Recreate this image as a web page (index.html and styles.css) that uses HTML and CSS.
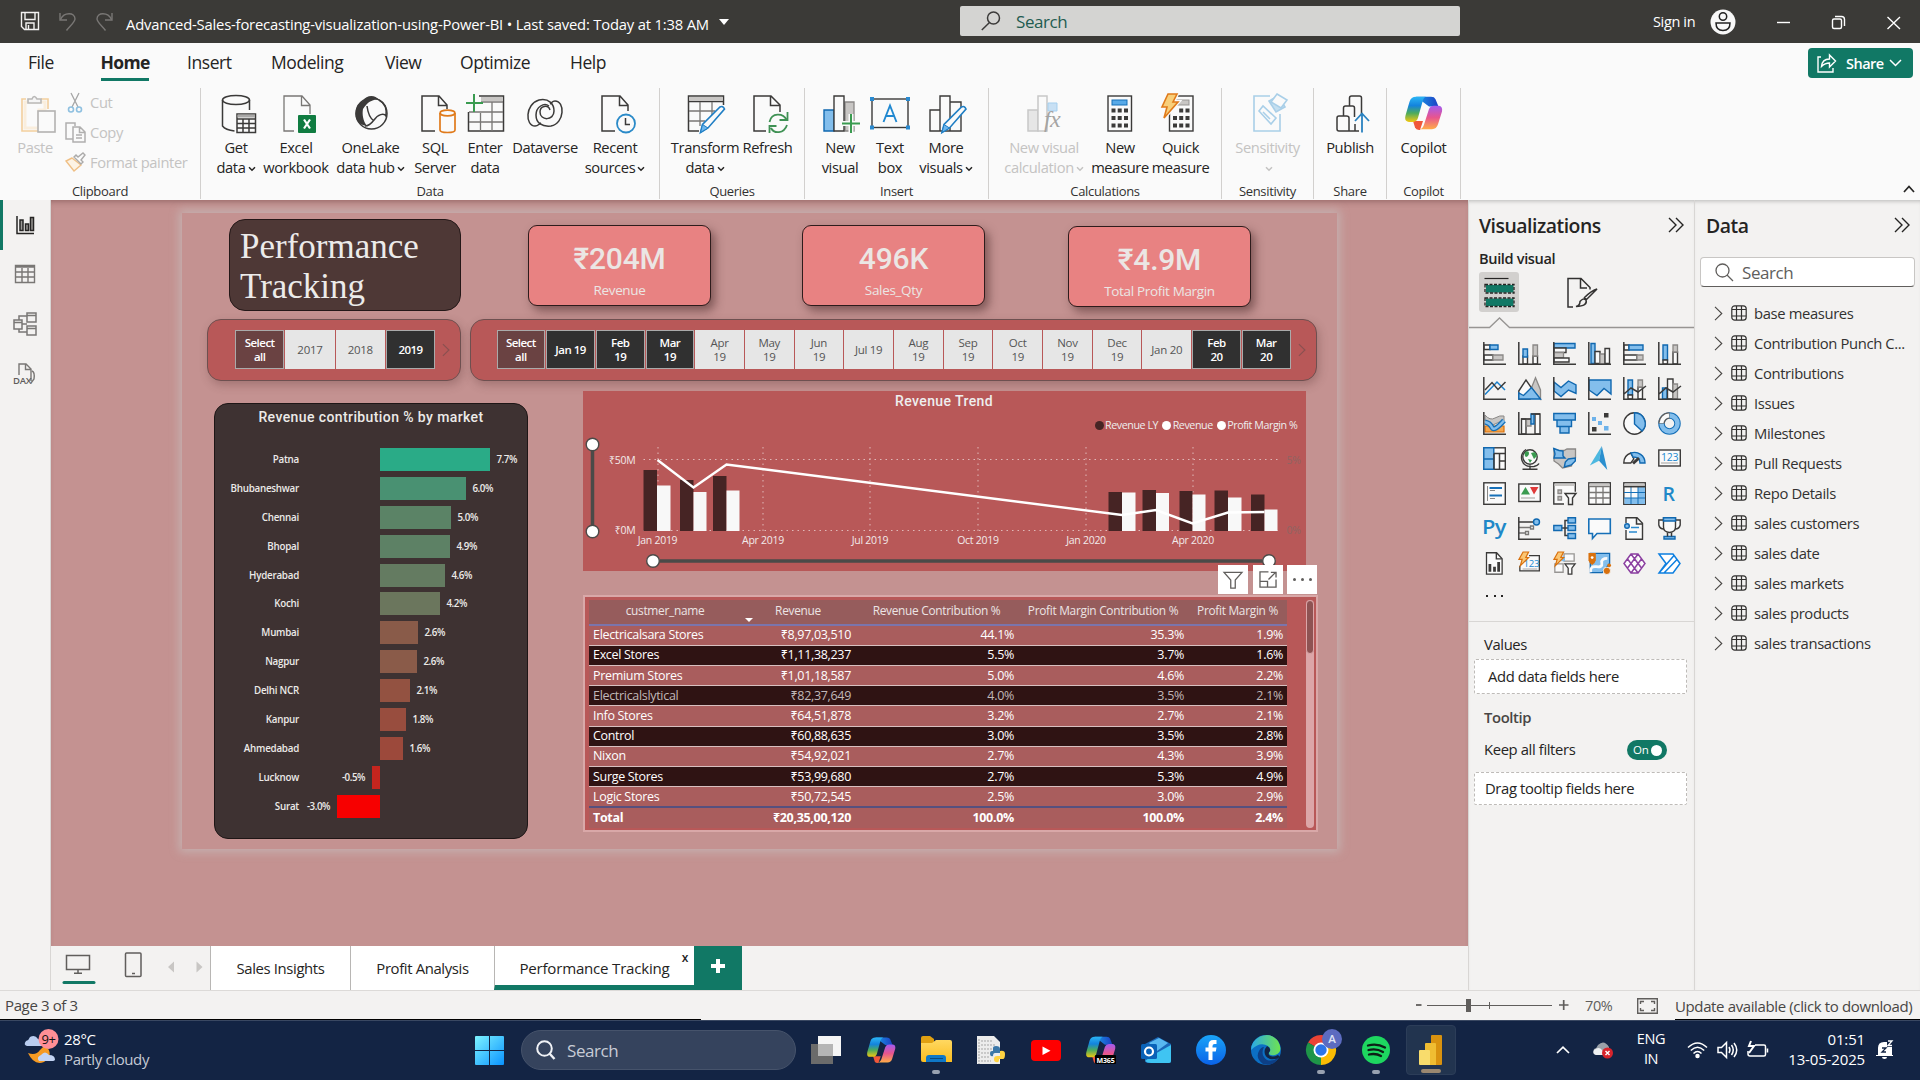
FILE: index.html
```html
<!DOCTYPE html>
<html lang="en">
<head>
<meta charset="utf-8">
<title>Advanced-Sales-forecasting-visualization-using-Power-BI</title>
<link rel="stylesheet" href="styles.css">
</head>
<body>
<svg class="defs" width="0" height="0" aria-hidden="true">
  <defs>
    <linearGradient id="cpA" x1="0" y1="0" x2="0" y2="1"><stop offset="0" stop-color="#2bb5f5"/><stop offset=".35" stop-color="#1383dd"/><stop offset=".65" stop-color="#4cab5c"/><stop offset="1" stop-color="#f2c811"/></linearGradient>
    <linearGradient id="cpB" x1="0" y1="0" x2="0" y2="1"><stop offset="0" stop-color="#a35bf0"/><stop offset=".5" stop-color="#e8558e"/><stop offset="1" stop-color="#ffac48"/></linearGradient>
    <linearGradient id="cpC" x1="0" y1="0" x2="1" y2="0"><stop offset="0" stop-color="#1b9be8"/><stop offset="1" stop-color="#1c3fc4"/></linearGradient>
    <linearGradient id="win" x1="0" y1="0" x2="1" y2="1"><stop offset="0" stop-color="#7df3ff"/><stop offset="1" stop-color="#0a93ff"/></linearGradient>
    <linearGradient id="edgeA" x1="0" y1="0" x2="1" y2="0"><stop offset="0" stop-color="#2aa9e8"/><stop offset="1" stop-color="#6fe34f"/></linearGradient>
    <linearGradient id="fbg" x1="0" y1="0" x2="0" y2="1"><stop offset="0" stop-color="#1aa4f8"/><stop offset="1" stop-color="#0a62e8"/></linearGradient>
    <linearGradient id="fold" x1="0" y1="0" x2="0" y2="1"><stop offset="0" stop-color="#ffd861"/><stop offset="1" stop-color="#fbbd20"/></linearGradient>
    <symbol id="copilot" viewBox="0 0 38 42" preserveAspectRatio="none">
      <path fill="url(#cpC)" d="M11 1h15q3.500 0 4.500 3l3 9H24Z"/>
      <path fill="#f0573a" d="M8 31h10l-3 11h-1q-3 0-4-3Z"/>
      <path fill="url(#cpA)" d="M11 1h10q-2.500 1-3.500 6L13 27q-1 5-5 5H4q-5 0-3.500-8L4.500 7Q6 1 11 1Z"/>
      <path fill="url(#cpB)" d="M27 41H14q3.500 0 4.800-5L24 16q1.500-4 5-4h4q5 0 4 7l-4 16q-1.500 6-6 6Z"/>
    </symbol>
    <symbol id="table" viewBox="0 0 16 16"><g fill="none" stroke="#323130" stroke-width="1.200"><rect x=".8" y=".8" width="14.400" height="14.400" rx="3"/><path d="M5.500 1v14M10.500 1v14M1 4.500h14M1 11h14"/></g></symbol>
    <symbol id="chev" viewBox="0 0 9 15"><path d="M1 .8 7.800 7.500 1 14.200" fill="none" stroke="#484644" stroke-width="1.100"/></symbol>
    <symbol id="dbl" viewBox="0 0 16 16"><path d="M1 1l7 7-7 7M8 1l7 7-7 7" fill="none" stroke="#252423" stroke-width="1.400"/></symbol>
    <symbol id="down" viewBox="0 0 8 6"><path d="M1 1.200l3 3 3-3" fill="none" stroke="currentColor" stroke-width="1.500"/></symbol>
  </defs>
</svg>

<header class="titlebar">
  <svg class="quick" width="100" height="24" viewBox="0 0 100 24" fill="none">
    <g stroke="#f3f2f1" stroke-width="1.400"><path d="M1.500 2.500h17v17H4.500l-3-3Z"/><path d="M5 2.500v7h10v-7M6 19v-6h8v6M8.500 15v4"/></g>
    <g stroke="#797775" stroke-width="1.400"><path d="M40 3v7h7"/><path d="M40.500 9.500C44 2 55 2 55 9c0 3-5 7-8.500 11.500"/><path d="M92 3v7h-7"/><path d="M91.500 9.500C88 2 77 2 77 9c0 3 5 7 8.500 11.500"/></g>
  </svg>
  <span class="doc">Advanced-Sales-forecasting-visualization-using-Power-BI • Last saved: Today at 1:38 AM</span>
  <svg class="caret" width="10" height="6"><path d="M0 0h10L5 6Z" fill="#fff"/></svg>
  <div class="search">
    <svg width="20" height="20" viewBox="0 0 20 20" fill="none" stroke="#3b3a39" stroke-width="1.500"><circle cx="12.500" cy="7" r="6"/><path d="M8.500 11.500 .8 19"/></svg>
    <span>Search</span>
  </div>
  <span class="signin">Sign in</span>
  <svg class="avatar" width="26" height="26" viewBox="0 0 26 26"><circle cx="13" cy="13" r="12.500" fill="#f8f8f8"/><g fill="none" stroke="#222" stroke-width="1.500"><circle cx="13" cy="7.500" r="3.700"/><path d="M6 14h14q0 7.500-7 7.500T6 14Z"/></g></svg>
  <svg class="winbtns" width="126" height="16" viewBox="0 0 126 16" fill="none" stroke="#fff" stroke-width="1.400"><path d="M1 7.500h13"/><rect x="56.500" y="4" width="9" height="9.500" rx="1.500"/><path d="M59 1.500h6.500q3 0 3 3V11"/><path d="M111.500 2l12.500 12M124 2l-12.500 12"/></svg>
</header>

<nav class="menu">
  <span class="m-file">File</span><span class="m-home">Home</span><span class="m-ins">Insert</span><span class="m-mod">Modeling</span><span class="m-view">View</span><span class="m-opt">Optimize</span><span class="m-help">Help</span>
  <div class="share">
    <svg width="20" height="20" viewBox="0 0 20 20" fill="none" stroke="#fff" stroke-width="1.400"><path d="M4 4H1v15h15v-4"/><path d="M4.500 13.500C5 8 8 6 12.500 6V2l6 6-6 6v-4C9 10 7 11 4.500 13.500Z"/></svg>
    <span>Share</span>
    <svg width="13" height="8" viewBox="0 0 13 8" fill="none" stroke="#fff" stroke-width="1.500"><path d="M1 1l5.500 5.500L12 1"/></svg>
  </div>
</nav>

<section class="ribbon">
  <div class="group g-clip">
    <div class="clip">
      <div class="paste off"><svg width="36" height="40" viewBox="0 0 36 40" fill="none" stroke-width="1.600"><path d="M5 5H1v32h17M20 5h7v10" stroke="#f3cf9d"/><path d="M4 8v26h14V16h6V8Z" stroke="#faeedd" stroke-width="3"/><path d="M7 9V5h4q2-5 5 0h4v4Z" stroke="#b9b8b7" fill="#f5f5f5"/><rect x="17" y="17" width="17" height="21" stroke="#b3b2b1" fill="#fafafa"/></svg><span>Paste</span></div>
      <div class="cliplist off">
        <div><svg width="21" height="21" viewBox="0 0 21 21" fill="none"><path d="M6 1l7 14M14 1 7 15" stroke="#a5a5a5" stroke-width="1.300"/><g stroke="#8fc0e0" stroke-width="1.600"><circle cx="6" cy="17.500" r="2.500"/><circle cx="14" cy="17.500" r="2.500"/></g></svg><span>Cut</span></div>
        <div><svg width="21" height="21" viewBox="0 0 21 21" fill="none" stroke="#b0afae" stroke-width="1.500"><path d="M8 17H1V1h9v3"/><path d="M8 5h7l5 5v10H8ZM14.500 5v5.500H20M11 13h6M11 16h6"/></svg><span>Copy</span></div>
        <div><svg width="21" height="21" viewBox="0 0 21 21" fill="none" stroke-width="1.400"><path d="M7 6 1 9l8 10 7-6Z" stroke="#efbf85" fill="#fdf3e4"/><path d="M9 5l7 7 2-2-2-2 4-5-2-2-5 4-2-2Z" stroke="#acabaa"/></svg><span>Format painter</span></div>
      </div>
    </div>
    <div class="gname">Clipboard</div>
  </div>
  <div class="group g-data">
    <div class="btns">
      <div class="btn"><svg class="ri" viewBox="0 0 40 40"><path class="k" d="M6.500 6v26q3 4 12 5M33.500 6v10"/><ellipse class="k" cx="20" cy="6" rx="13.500" ry="4.500"/><path class="k" d="M21 20h18.500v18.500H21ZM21 25h18.500M21 29.500h18.500M21 34h18.500M27 25v13M33 25v13"/><path d="M21.500 20.500h17.500v3H21.500Z" fill="#a9a8a7"/></svg><span>Get<br>data<svg class="dn"><use href="#down"/></svg></span></div>
      <div class="btn"><svg class="ri" viewBox="0 0 40 40"><path class="gl" d="M18 37H8V2h18l8 9v9M25.500 2v9.500H34"/><rect x="22" y="21" width="18" height="18" rx="1" fill="#107c41"/><path d="M28 25.500l6 9M34 25.500l-6 9" stroke="#fff" stroke-width="2.200"/></svg><span>Excel<br>workbook</span></div>
      <div class="btn"><svg class="ri" viewBox="0 0 40 40"><circle class="k" cx="20.500" cy="19.500" r="15.500"/><path d="M12 7C15 1 24 0 28 6c-5-1-11 1-16 9-1 5 0 12 4 17C6 31 2 22 6 13c1-3 3-4 6-6Z" fill="#3b3a39"/><path class="k" d="M28 6c6 3 8 8 7 16-2-3-8-2-12 4-3 4-6 6-9 6M16 12c1 8 4 13 7 15"/></svg><span>OneLake<br>data hub<svg class="dn"><use href="#down"/></svg></span></div>
      <div class="btn"><svg class="ri" viewBox="0 0 40 40"><path class="k" d="M20 37H7V2h17l8 9v4M23.500 2v9.500H32"/><g fill="#fafafa" stroke="#e07a1a" stroke-width="1.700"><path d="M25 19v17q0 2.500 7.500 2.500T40 36V19"/><ellipse cx="32.500" cy="19" rx="7.400" ry="2.800"/></g></svg><span>SQL<br>Server</span></div>
      <div class="btn"><svg class="ri" viewBox="0 0 40 40"><path class="k" d="M14 2h24.500v35H3.500V18"/><path d="M16 3h21.500v4H16Z" fill="#c8c6c4"/><path class="gl" d="M16 8h22M4 18h34M4 28h34M15.500 19v18M27 8v29"/><path d="M9 0v18M1 9h17" stroke="#3a9b50" stroke-width="2"/></svg><span>Enter<br>data</span></div>
      <div class="btn"><svg class="ri" viewBox="0 0 40 40"><g class="k"><path d="M10 32C0 32 0 10 14 6c10-2 15 4 15 11 0 10-14 10-14 1 0-6 8-8 10-2"/><path d="M30 7c10 0 10 22-4 25-9 1-15-3-15-11 0-8 8-13 13-9"/><path d="M30 7c-3 0-3 2-5 3M10 32c3 0 4-2 6-3"/></g></svg><span>Dataverse</span></div>
      <div class="btn"><svg class="ri" viewBox="0 0 40 40"><path class="k" d="M20 37H7V2h18l8 9v6M24.500 2v9.500H33"/><circle cx="31" cy="29.500" r="9" fill="#fafafa" stroke="#2a8ac8" stroke-width="1.800"/><path d="M30.500 24v6.500H35" stroke="#3b3a39" fill="none" stroke-width="1.500"/></svg><span>Recent<br>sources<svg class="dn"><use href="#down"/></svg></span></div>
    </div>
    <div class="gname">Data</div>
  </div>
  <div class="group g-query">
    <div class="btns">
      <div class="btn"><svg class="ri" viewBox="0 0 40 40"><path class="k" d="M14 37H3.500V2h35v9M3.500 7.500h35"/><path d="M4.500 3h33v4h-33Z" fill="#c8c6c4"/><path class="gl" d="M4 17h26M4 27h16M15 8v24M27 8v14"/><path class="pen" d="M15.500 38.500l2-8L35 13q3-1.500 4.500 2L23 34Z"/><path class="pb" d="M15.500 38.500l2-8L23 34Z"/></svg><span>Transform<br>data<svg class="dn"><use href="#down"/></svg></span></div>
      <div class="btn"><svg class="ri" viewBox="0 0 40 40"><path class="k" d="M18 37H6V2h17l9 9v7M22.500 2v9.500H32"/><g fill="none" stroke="#3f9154" stroke-width="1.800"><path d="M21.500 28c2-10 14-9 17-2M39.500 18v8h-8M39 31c-3 9-13 9-16 3M21.500 39v-7h7"/></g></svg><span>Refresh</span></div>
    </div>
    <div class="gname">Queries</div>
  </div>
  <div class="group g-ins">
    <div class="btns">
      <div class="btn"><svg class="ri" viewBox="0 0 40 40"><path class="g" d="M25 8h9v29h-9Z"/><path class="b" d="M4 16h10v21H4Z"/><path class="w" d="M14 2h10v35H14Z"/><path d="M31 20v19M22 29.500h18" stroke="#fafafa" stroke-width="5"/><path d="M31 20v19M22 29.500h18" stroke="#3a9b50" stroke-width="2"/></svg><span>New<br>visual</span></div>
      <div class="btn"><svg class="ri" viewBox="0 0 40 40"><rect class="w" x="2" y="5" width="36" height="28.500"/><path d="M0 3h4v4H0ZM36 3h4v4h-4ZM0 31.500h4v4H0ZM36 31.500h4v4h-4Z" fill="#2a8ad0"/><path d="M13.500 28 20 11.500 26.500 28M16 22h8" fill="none" stroke="#2088d0" stroke-width="1.900"/></svg><span>Text<br>box</span></div>
      <div class="btn"><svg class="ri" viewBox="0 0 40 40"><path class="w" d="M4 16h10v21H4ZM24 8h11v29H24ZM14 2h10v35H14Z"/><path class="pen" d="M16 38.500l2-8L35.500 13q3-1.500 4.500 2L23.500 34Z"/><path class="pb" d="M16 38.500l2-8 5.500 3.500Z"/></svg><span>More<br>visuals<svg class="dn"><use href="#down"/></svg></span></div>
    </div>
    <div class="gname">Insert</div>
  </div>
  <div class="group g-calc">
    <div class="btns">
      <div class="btn off"><svg class="ri" viewBox="0 0 40 40"><g stroke="#c8c8c8" stroke-width="1.500"><path d="M4 16h10v21H4Z" fill="#e6e6e6"/><path d="M14 2h9v35h-9Z" fill="#fafafa"/></g><path d="M24 9h9v8h-9Z" fill="#c8e0f4" stroke="#a5cfee"/><text x="20" y="33" font-family="Liberation Serif" font-style="italic" font-size="24" fill="#a5a4a3">fx</text></svg><span>New visual<br>calculation<svg class="dn"><use href="#down"/></svg></span></div>
      <div class="btn"><svg class="ri" viewBox="0 0 40 40"><rect class="w" x="8" y="2" width="23.500" height="35"/><rect x="12" y="6" width="15" height="5" fill="#58aae8" stroke="#1670b8"/><g fill="#3b3a39"><path d="M11.500 14.500h4v4h-4ZM17.700 14.500h4v4h-4ZM24 14.500h4v4h-4ZM11.500 22h4v4h-4ZM17.700 22h4v4h-4ZM24 22h4v4h-4ZM11.500 29.500h4v4h-4ZM17.700 29.500h4v4h-4ZM24 29.500h4v4h-4Z"/></g></svg><span>New<br>measure</span></div>
      <div class="btn"><svg class="ri" viewBox="0 0 40 40"><rect class="w" x="8.500" y="2" width="23.500" height="35"/><rect x="15" y="6" width="13" height="5" fill="#c8c6c4" stroke="#979593"/><g fill="#3b3a39"><path d="M18.200 14.500h4v4h-4ZM24.500 14.500h4v4h-4ZM12 22h4v4h-4ZM18.200 22h4v4h-4ZM24.500 22h4v4h-4ZM12 29.500h4v4h-4ZM18.200 29.500h4v4h-4ZM24.500 29.500h4v4h-4Z"/></g><path d="M7 0h9l-4 8h5L3 24l3-11H1Z" fill="#f8cf7a" stroke="#fafafa" stroke-width="4"/><path d="M7 0h9l-4 8h5L3 24l3-11H1Z" fill="#f8cf7a" stroke="#e07a1a" stroke-width="1.600"/></svg><span>Quick<br>measure</span></div>
    </div>
    <div class="gname">Calculations</div>
  </div>
  <div class="group g-sens">
    <div class="btns">
      <div class="btn off"><svg class="ri" viewBox="0 0 40 40" fill="#fafafa" stroke="#a9cfe8" stroke-width="1.600"><path d="M22 2H6v35h26V20"/><path d="M11 17l4-5 13 12-5 6ZM15 18l7 7"/><path d="M21 7l7 11 9-5-7-11Z" fill="#c5dff0"/><path d="M29 0l10 6-6 8-10-6Z"/></svg><span>Sensitivity<br><svg class="dn"><use href="#down"/></svg></span></div>
    </div>
    <div class="gname">Sensitivity</div>
  </div>
  <div class="group g-share">
    <div class="btns">
      <div class="btn"><svg class="ri" viewBox="0 0 40 40"><g class="k"><path d="M19.500 12V4q0-2 2-2h8q2 0 2 2v16M13.500 22V14q0-2 2-2h7q2 0 2 2v9M29 37H9q-2 0-2-2V24q0-2 2-2h7.500q2.500 0 2.500 2v13M25 30v7"/></g><path d="M32 38.500V20M25 27l7-7.500 7 7.500" fill="none" stroke="#2a82c0" stroke-width="1.800"/></svg><span>Publish</span></div>
    </div>
    <div class="gname">Share</div>
  </div>
  <div class="group g-cop">
    <div class="btns">
      <div class="btn"><svg class="ri"><use href="#copilot" x="1" y="2" width="38" height="34"/></svg><span>Copilot</span></div>
    </div>
    <div class="gname">Copilot</div>
  </div>
  <svg class="fold" width="12" height="8" viewBox="0 0 12 8" fill="none" stroke="#252423" stroke-width="1.700"><path d="M1 7l5-5.500L11 7"/></svg>
</section>

<main class="work">
  <aside class="rail">
    <div class="rail-on"><svg width="20" height="20" viewBox="0 0 20 20" fill="none" stroke="#252423" stroke-width="1.500"><path d="M2 1v17.500h17"/><path d="M5 5h3v10.500H5ZM10.500 9h3v6.500h-3ZM15.500 2.500h3v13h-3Z" fill="#9a9896"/></svg></div>
    <div><svg width="22" height="20" viewBox="0 0 22 20" fill="none" stroke="#797775" stroke-width="1.400"><path d="M1.500 1.500h19v17h-19ZM1.500 3h19M1.500 8h19M1.500 13h19M8 4v15M14 4v15"/></svg></div>
    <div><svg width="24" height="24" viewBox="0 0 24 24" fill="none" stroke="#797775" stroke-width="1.500"><path d="M1 8h8v9H1ZM1 10.500h8M14 1h9v9h-9ZM14 3.500h9M14 14h9v9h-9ZM14 16.500h9M6 8V4h8M6 17v3h8M9 12h5"/></svg></div>
    <div><svg width="24" height="22" viewBox="0 0 24 22" fill="none" stroke="#797775" stroke-width="1.400"><path d="M6 12V1h7l5 5v12M12.500 1v5.500H18M19 8q3 1 2 8l-3 4"/><text x="0" y="21" font-size="9.500" font-weight="600" fill="#605e5c" stroke="none">DAX</text></svg></div>
  </aside>

  <div class="center">
    <div class="canvas">
      <div class="page">
        <div class="row1">
          <h1 class="ptitle">Performance<br>Tracking</h1>
          <div class="kpi k1"><b>₹204M</b><span>Revenue</span></div>
          <div class="kpi k2"><b>496K</b><span>Sales_Qty</span></div>
          <div class="kpi k3"><b>₹4.9M</b><span>Total Profit Margin</span></div>
        </div>
        <div class="row2">
          <div class="slicer s1">
            <div class="tile part">Select all</div><div class="tile">2017</div><div class="tile">2018</div><div class="tile sel">2019</div>
            <svg class="more" viewBox="0 0 9 15"><path d="M1 .8 7.800 7.500 1 14.200"/></svg>
          </div>
          <div class="slicer s2">
            <div class="tile part">Select all</div><div class="tile sel">Jan 19</div><div class="tile sel">Feb<br>19</div><div class="tile sel">Mar<br>19</div><div class="tile">Apr<br>19</div><div class="tile">May<br>19</div><div class="tile">Jun<br>19</div><div class="tile">Jul 19</div><div class="tile">Aug<br>19</div><div class="tile">Sep<br>19</div><div class="tile">Oct<br>19</div><div class="tile">Nov<br>19</div><div class="tile">Dec<br>19</div><div class="tile">Jan 20</div><div class="tile sel">Feb<br>20</div><div class="tile sel">Mar<br>20</div>
            <svg class="more" viewBox="0 0 9 15"><path d="M1 .8 7.800 7.500 1 14.200"/></svg>
          </div>
        </div>
        <div class="row3">
          <div class="market">
            <h2>Revenue contribution % by market</h2>
            <div class="mrow"><span class="city">Patna</span><i class="neg"></i><i class="bar" style="width:110px;background:#2aab87"></i><em>7.7%</em></div>
            <div class="mrow"><span class="city">Bhubaneshwar</span><i class="neg"></i><i class="bar" style="width:86px;background:#499172"></i><em>6.0%</em></div>
            <div class="mrow"><span class="city">Chennai</span><i class="neg"></i><i class="bar" style="width:71px;background:#5b8366"></i><em>5.0%</em></div>
            <div class="mrow"><span class="city">Bhopal</span><i class="neg"></i><i class="bar" style="width:70px;background:#5d8165"></i><em>4.9%</em></div>
            <div class="mrow"><span class="city">Hyderabad</span><i class="neg"></i><i class="bar" style="width:65px;background:#647b61"></i><em>4.6%</em></div>
            <div class="mrow"><span class="city">Kochi</span><i class="neg"></i><i class="bar" style="width:60px;background:#6b765d"></i><em>4.2%</em></div>
            <div class="mrow"><span class="city">Mumbai</span><i class="neg"></i><i class="bar" style="width:38px;background:#895b49"></i><em>2.6%</em></div>
            <div class="mrow"><span class="city">Nagpur</span><i class="neg"></i><i class="bar" style="width:37px;background:#8a5b49"></i><em>2.6%</em></div>
            <div class="mrow"><span class="city">Delhi NCR</span><i class="neg"></i><i class="bar" style="width:30px;background:#935241"></i><em>2.1%</em></div>
            <div class="mrow"><span class="city">Kanpur</span><i class="neg"></i><i class="bar" style="width:26px;background:#984d3e"></i><em>1.8%</em></div>
            <div class="mrow"><span class="city">Ahmedabad</span><i class="neg"></i><i class="bar" style="width:23px;background:#9c493b"></i><em>1.6%</em></div>
            <div class="mrow"><span class="city">Lucknow</span><i class="neg"><em>-0.5%</em><i class="bar" style="width:8px;background:#c5251e"></i></i></div>
            <div class="mrow"><span class="city">Surat</span><i class="neg"><em>-3.0%</em><i class="bar" style="width:43px;background:#f70000"></i></i></div>
          </div>
          <div class="right">
            <div class="trend">
              <h2>Revenue Trend</h2>
              <div class="legend"><i class="dk"></i><span>Revenue LY</span><i></i><span>Revenue</span><i></i><span>Profit Margin %</span></div>
              <svg class="plot" width="723" height="140" viewBox="583.500 432 723 140">
                <g class="grid"><path d="M644 459.500H1280M644 530.500H1280"/><path d="M658.500 447v84M763.500 447v84M870.500 447v84M978.500 447v84M1086.500 447v84M1193.500 447v84"/></g>
                <g fill="#462424"><path d="M644 470h13.500v61H644ZM680.500 480H694v51h-13.500ZM713.500 476H727v55h-13.500ZM1109 492h13.500v39H1109ZM1143 490h13.500v41H1143ZM1180 491h13v40h-13ZM1215 490.500h13.500V531H1215ZM1251.500 494.500H1265V531h-13.500Z"/></g>
                <g fill="#f8f8f8"><path d="M657.500 485.500H671V531h-13.500ZM694 492h13v39h-13ZM727 490.500h13V531h-13ZM1122.500 492.500H1136V531h-13.500ZM1156.500 493h13v38h-13ZM1193 494.500h13V531h-13ZM1228.500 497.500H1242V531h-13.500ZM1265 509.500h13V531h-13Z"/></g>
                <path d="M658 460l36 27.500 33-23L1122.500 515l34-5 36.500 13.500 35.500-11 36.500-.5" fill="none" stroke="#fff" stroke-width="2.400"/>
                <g class="axis"><text x="636" y="463.500" text-anchor="end">₹50M</text><text x="636" y="534" text-anchor="end">₹0M</text></g>
                <g class="axis" text-anchor="middle"><text x="658" y="544">Jan 2019</text><text x="763.500" y="544">Apr 2019</text><text x="870.500" y="544">Jul 2019</text><text x="978.500" y="544">Oct 2019</text><text x="1086.500" y="544">Jan 2020</text><text x="1193.500" y="544">Apr 2020</text></g>
                <g class="axis dim"><text x="1287" y="463.500">5%</text><text x="1287" y="534">0%</text></g>
                <g stroke="#4b4a48" stroke-width="3.500"><path d="M593 445v86M653 561h616"/></g>
                <g fill="#fff" stroke="#4b4a48" stroke-width="1.400"><circle cx="593" cy="444.500" r="6.300"/><circle cx="593" cy="531.500" r="6.300"/><circle cx="653.500" cy="561" r="6.300"/><circle cx="1269.500" cy="561" r="6.300"/></g>
              </svg>
            </div>
            <div class="vhead">
              <span><svg width="20" height="18" viewBox="0 0 22 20"><path d="M1 1.500h20L13.500 10v9h-5v-9Z"/></svg></span>
              <span><svg width="18" height="17" viewBox="0 0 19 18"><path d="M10 1H1v16h17V9M1 11h8v6M10 9l7-7M12.500 1.500H18V7"/></svg></span>
              <span class="dots"><i></i><i></i><i></i></span>
            </div>
            <div class="tbl">
              <table>
                <thead><tr><th>custmer_name</th><th class="srt">Revenue</th><th>Revenue Contribution %</th><th>Profit Margin Contribution %</th><th>Profit Margin %</th></tr></thead>
                <tbody>
                  <tr><td>Electricalsara Stores</td><td>₹8,97,03,510</td><td>44.1%</td><td>35.3%</td><td>1.9%</td></tr>
                  <tr><td>Excel Stores</td><td>₹1,11,38,237</td><td>5.5%</td><td>3.7%</td><td>1.6%</td></tr>
                  <tr><td>Premium Stores</td><td>₹1,01,18,587</td><td>5.0%</td><td>4.6%</td><td>2.2%</td></tr>
                  <tr class="hov"><td>Electricalslytical</td><td>₹82,37,649</td><td>4.0%</td><td>3.5%</td><td>2.1%</td></tr>
                  <tr><td>Info Stores</td><td>₹64,51,878</td><td>3.2%</td><td>2.7%</td><td>2.1%</td></tr>
                  <tr><td>Control</td><td>₹60,88,635</td><td>3.0%</td><td>3.5%</td><td>2.8%</td></tr>
                  <tr><td>Nixon</td><td>₹54,92,021</td><td>2.7%</td><td>4.3%</td><td>3.9%</td></tr>
                  <tr><td>Surge Stores</td><td>₹53,99,680</td><td>2.7%</td><td>5.3%</td><td>4.9%</td></tr>
                  <tr><td>Logic Stores</td><td>₹50,72,545</td><td>2.5%</td><td>3.0%</td><td>2.9%</td></tr>
                </tbody>
                <tfoot><tr><td>Total</td><td>₹20,35,00,120</td><td>100.0%</td><td>100.0%</td><td>2.4%</td></tr></tfoot>
              </table>
              <div class="scroll"><i></i></div>
            </div>
          </div>
        </div>
      </div>
    </div>
    <div class="pages">
      <div class="devs"><svg width="159" height="40" viewBox="51 948 159 40" fill="none"><g stroke="#605e5c" stroke-width="1.500"><path d="M66.500 955.500h23v14h-23ZM78 970v3M74 973.200h8"/><rect x="125.500" y="953" width="15.500" height="23.500" rx="1"/><path d="M132 973.500h3"/></g><path d="M64 982.500h30" stroke="#117865" stroke-width="3" stroke-linecap="round"/><path d="M174 961.500v11l-6-5.500ZM196.500 961.500v11l6-5.500Z" fill="#c8c6c4"/></svg></div>
      <div class="tab t1">Sales Insights</div>
      <div class="tab t2">Profit Analysis</div>
      <div class="tab t3">Performance Tracking<b>x</b></div>
      <div class="plus"><svg width="14" height="14"><path d="M7 0v14M0 7h14" stroke="#fff" stroke-width="4"/></svg></div>
    </div>
  </div>

  <aside class="viz">
    <div class="phead"><h3>Visualizations</h3><svg width="16" height="16"><use href="#dbl"/></svg></div>
    <div class="build">Build visual</div>
    <div class="modes">
      <div class="mode"><svg width="31" height="31" viewBox="0 0 31 31"><path d="M.5 1.500h24" stroke="#252423" stroke-width="1.200"/><path d="M2 8h27.500v7.500H2ZM2 21.500h27.500V29H2Z" fill="#117865"/><path d="M1 7.500h29v8.500H1ZM1 21h29v8.500H1Z" fill="none" stroke="#252423" stroke-width="1.300" stroke-dasharray="3 1.500"/></svg></div>
      <svg class="fmt" width="31" height="31" viewBox="0 0 31 31" fill="none" stroke="#323130" stroke-width="1.500"><path d="M6 30H1V1.500h13l9 9v2M13.500 1.500v9.500H20M30 12 19.500 22.500l-2-2Q24 14 30 12ZM19 23q2 6-10 6.500 4-1 4-5 3-4 6-1.500Z"/></svg>
    </div>
    <svg class="notch" width="225" height="12" viewBox="0 0 225 12"><path d="M0 10.500h20.500l10-9.500 10 9.500H225" fill="none" stroke="#979593" stroke-width="1.300"/></svg>
    <div class="icons">
      <svg viewBox="0 0 23 23"><path class="w" d="M1 3h6v4.500H1Z"/><path class="b" d="M7 3h8v4.500H7Z"/><path class="w" d="M1 13h9v5H1Z"/><path class="g" d="M10 13h10v5H10Z"/><path class="k" d="M.8 0v22.200H23"/></svg>
      <svg viewBox="0 0 23 23"><path class="w" d="M5 14h4.500v8H5Z"/><path class="b" d="M5 7h4.500v8H5Z"/><path class="w" d="M15 14h4.500v8H15Z"/><path class="g" d="M15 3h4.500v11H15Z"/><path class="k" d="M.8 0v22.200H23"/></svg>
      <svg viewBox="0 0 23 23"><path class="b" d="M1 1.500h21v4.500H1Z"/><path class="w" d="M1 6h12v4.500H1Z"/><path class="g" d="M1 10.500h9.500V16H1Z"/><path class="w" d="M1 16h15v4H1Z"/><path class="k" d="M.8 0v22.200H23"/></svg>
      <svg viewBox="0 0 23 23"><path class="b" d="M3 1.500h4v20H3Z"/><path class="w" d="M7 9.500h5v12H7Z"/><path class="g" d="M12 12h5v10h-5Z"/><path class="w" d="M17 6.500h4.500v15H17Z"/><path class="k" d="M.8 0v22.200H23"/></svg>
      <svg viewBox="0 0 23 23"><path class="w" d="M1 3h5v5H1Z"/><path class="b" d="M6 3h14v5H6Z"/><path class="w" d="M1 13h13v5H1Z"/><path class="g" d="M14 13h6v5h-6Z"/><path class="k" d="M.8 0v22.200H23"/></svg>
      <svg viewBox="0 0 23 23"><path class="b" d="M5 3h4.500v15H5Z"/><path class="w" d="M5 18h4.500v4H5ZM15 10h4.500v12H15Z"/><path class="g" d="M15 3h4.500v7H15Z"/><path class="k" d="M.8 0v22.200H23"/></svg>

      <svg viewBox="0 0 23 23"><path d="M2 17.500 14 5l8 8" fill="none" stroke="#1a80cc" stroke-width="1.500"/><path class="k" d="M2 13l7-7.500 6 7L22.500 5"/><path class="k" d="M.8 0v22.200H23"/></svg>
      <svg viewBox="0 0 23 23"><path class="g" d="M13 12 17.500.8 22.500 13v9Z"/><path class="w" d="M.8 14 8 3l7 10-3 9H.8Z"/><path class="b" d="M.8 22V16l4.700 2.500 8-8 9 11.500Z"/></svg>
      <svg viewBox="0 0 23 23"><path class="b" d="M1 5l7 5.500L15.500 4 23 8v8.500L15.500 13 8 19.500 1 14Z"/><path class="k" d="M.8 0v22.200H23"/></svg>
      <svg viewBox="0 0 23 23"><path class="b" d="M1 3h22v14l-7-5.500L9 18.500 1 13Z"/><path class="k" d="M.8 0v22.200H23"/></svg>
      <svg viewBox="0 0 23 23"><path class="b" d="M5 3h4.500v15H5Z"/><path class="w" d="M5 18h4.500v4H5ZM15 10h4.500v12H15Z"/><path class="g" d="M15 3h4.500v7H15Z"/><path class="k" d="M1 17l7-6 7 4 8-6M.8 0v22.200H23"/></svg>
      <svg viewBox="0 0 23 23"><path class="b" d="M4.500 11H9v11H4.500Z"/><path class="w" d="M9.500 2H15v20H9.500Z"/><path class="g" d="M15 7h4.500v15H15Z"/><path class="k" d="M1 17l7-6 7 4 8-6M.8 0v22.200H23"/></svg>

      <svg viewBox="0 0 23 23"><path d="M2 3q5 6 10 3t9-2v6q-5-1-9 2T2 9Z" fill="#c8c6c4" stroke="#8a8886"/><path d="M2 14h19v6H2Z" fill="#f4a64e" stroke="#d9710d" stroke-width="1.200"/><path d="M2 10q5 1 7 5.500t12-7" fill="none" stroke="#1670b8" stroke-width="5"/><path d="M2 10q5 1 7 5.500t12-7" fill="none" stroke="#83beec" stroke-width="2.500"/><path class="k" d="M.8 0v22.200H23"/></svg>
      <svg viewBox="0 0 23 23"><path class="w" d="M3.500 7H8v15H3.500ZM17 2h5v20h-5Z"/><path class="g" d="M8.500 7H13v7H8.500Z"/><path class="b" d="M13 2h3v10h-3Z"/><path class="k" d="M.8 0v22.200H23M3 7h10M13 2h9"/></svg>
      <svg viewBox="0 0 23 23"><path class="b" d="M.8 1.500h21.500v6.500H.8ZM4 8h14.500v6.500H4ZM7 14.500h9V21H7Z"/></svg>
      <svg viewBox="0 0 23 23"><path d="M16 1h4.500v4.500H16ZM4 15h4.500v4.500H4Z" fill="#3b3a39"/><path d="M4 5h4v4H4ZM10 9h4v4h-4ZM16 14h4.500v4.500H16Z" fill="#6db2ea"/><path class="k" d="M.8 0v22.200H23"/></svg>
      <svg viewBox="0 0 23 23"><circle class="w" cx="11.500" cy="11.500" r="10.700"/><path class="b" d="M11.500.8a10.700 10.700 0 0 1 7.600 18.200L11.500 12Z"/></svg>
      <svg viewBox="0 0 23 23"><circle cx="11.500" cy="11.500" r="8" fill="none" stroke="#1670b8" stroke-width="6.500"/><circle cx="11.500" cy="11.500" r="8" fill="none" stroke="#83beec" stroke-width="4.500"/><path d="M3.500 11.500a8 8 0 0 1 8-8" fill="none" stroke="#605e5c" stroke-width="6.500"/><path d="M3.500 11a8 8 0 0 1 7.500-7.500" fill="none" stroke="#fafafa" stroke-width="4"/></svg>

      <svg viewBox="0 0 23 23"><rect class="w" x=".8" y=".8" width="21.500" height="21.500"/><path class="b" d="M.8.8h10V12H.8ZM.8 12h10v10.300H.8Z"/><path class="k" d="M11 6.500h11M16.500 7v15M11 6.500v15.800M16.500 14h6"/></svg>
      <svg viewBox="0 0 23 23"><circle class="w" cx="12" cy="10" r="7.200"/><path d="M7 5q4-2 4 1t-3 4q-2-1-1-5ZM13 6l4-1 2 4-3 3ZM10 12l4 1-2 3Z" fill="#3a9b50"/><path d="M8 2.500q-6 4-4 11t12 6q4-1 5-3M12 18.500V22M4.500 22.200h15" fill="none" stroke="#3b3a39" stroke-width="1.400"/></svg>
      <svg viewBox="0 0 23 23"><path class="g" d="M1 2l4 1.500h6L14 2h8.500v9l-3 3-1 5-5 1-4 1-4-4-4.500-3Z"/><path class="b" d="M.8 1.500 6 3.500l4 .5v5l2 2H1l1-4ZM22.300 11v3l-4 4-7 2 1-5 3-3Z"/></svg>
      <svg viewBox="0 0 23 25"><path d="M14-1 1 20l10-5Z" fill="#4db8e0"/><path d="M14-1l6 26-9-10Z" fill="#2a8fcf"/></svg>
      <svg viewBox="0 0 23 23"><path class="w" d="M.8 16a10.500 10.500 0 0 1 7-10l3 6-3 4Z"/><path class="b" d="M8 6a10.500 10.500 0 0 1 14 10h-5q0-6-7-6Z"/><path d="M10 16.500l6-5.500" stroke="#3b3a39" stroke-width="3"/></svg>
      <svg viewBox="0 0 23 23"><rect class="w" x=".8" y="3" width="21.500" height="16"/><text x="3" y="13.500" font-size="10.500" fill="#2088d0">123</text><path d="M3 16h17" stroke="#a19f9d"/></svg>

      <svg viewBox="0 0 23 23"><rect class="w" x=".8" y=".8" width="21.500" height="21.500"/><path d="M4.500 4v15M7 8.500h5M7 16.500h5" stroke="#8a8886" fill="none"/><path d="M6.500 6h12.500M6.500 13.500h12.500" stroke="#1670b8" stroke-width="2"/></svg>
      <svg viewBox="0 0 23 23"><rect class="w" x=".8" y="2" width="21.500" height="17.500"/><path d="M3 12.500 7.500 5l4.500 7.500Z" fill="#3a9b50"/><path d="M12 5h8.500L16 12.500Z" fill="#e03a3a"/><path d="M3 16h14" stroke="#a19f9d"/></svg>
      <svg viewBox="0 0 23 23"><path class="w" d="M11 22H.8V.8h21.500v9"/><path d="M1.500 1.500h20V4h-20Z" fill="#c8c6c4"/><path class="g" d="M5 8h3.500v3.500H5ZM5 14.500h3.500V18H5Z"/><path class="w" d="M12 11.500h11l-3.500 4.500v6.500h-4V16Z"/></svg>
      <svg viewBox="0 0 23 23"><rect class="w" x=".8" y=".8" width="21.500" height="21.500"/><path d="M1.500 1.500h20V4h-20Z" fill="#c8c6c4"/><path class="gl" d="M1 4.700h21M1 10.500h21M1 16h21M8 5v17M15 5v17"/></svg>
      <svg viewBox="0 0 23 23"><rect class="w" x=".8" y=".8" width="21.500" height="21.500"/><path d="M1.500 1.500h20V4h-20Z" fill="#c8c6c4"/><path d="M15 5h7v17H1.500v-6H15Z" fill="#83beec"/><path d="M1 10.500h21M1 16h21M8 5v17M15 5v17" fill="none" stroke="#1670b8"/><path class="k" d="M1 4.700h21"/></svg>
      <svg viewBox="0 0 23 23"><text x="4.500" y="18.500" font-size="20" font-weight="600" fill="#2088c8" textLength="12" lengthAdjust="spacingAndGlyphs">R</text></svg>

      <svg viewBox="0 0 23 23"><text x="-1" y="17" font-size="20" font-weight="600" fill="#2088c8" textLength="24" lengthAdjust="spacingAndGlyphs">Py</text></svg>
      <svg viewBox="0 0 23 23"><path class="gl" d="M1 10.500h12M1 16h7"/><path class="k" d="M1 5h15"/><circle class="b" cx="18.500" cy="5" r="3"/><path class="gl" d="M12.500 9h3v3h-3ZM7.500 14.500h3v3h-3Z"/><path class="k" d="M.8 0v22.200H23"/></svg>
      <svg viewBox="0 0 23 23"><path class="k" d="M8 11h7M15 3.500h-3v15h3"/><path class="b" d="M.8 8.500h8v5h-8ZM15 .8h7.500V6H15ZM15 8.500h7.500v5H15ZM15 16.500h7.500v5H15Z"/></svg>
      <svg viewBox="0 0 23 23"><path d="M.8 2h21.500v14.500H9L4.500 21.500v-5H.8Z" fill="#fafafa" stroke="#1670b8" stroke-width="1.600"/></svg>
      <svg viewBox="0 0 23 23"><path class="w" d="M3 6V.8h11l5.500 5.500v16H3V13"/><path class="k" d="M13.500 1v6h6"/><circle class="b" cx="4" cy="9" r="2.300"/><path d="M8 10.500h8M6 15h8" stroke="#2a8ad0" stroke-width="1.400"/></svg>
      <svg viewBox="0 0 23 23"><path class="w" d="M5.500 3H.8v5q1 4 5 4M17.500 3h4.700v5q-1 4-5 4M5.500 1h12v9q0 5-6 5.500-6-.5-6-5.500Z"/><path class="b" d="M5.500.8h12V4h-12ZM6 19.500h11V22H6Z"/><path class="k" d="M9.500 15.500v4M13.500 15.500v4"/></svg>

      <svg viewBox="0 0 23 25"><path class="w" d="M2.800.8h11l6 6.500V24h-17Z"/><path class="k" d="M13.500 1v6.500h6"/><path d="M5 13h3v8.500H5ZM10 16h3v5.500h-3ZM14.500 11h3v10.500h-3Z" fill="#3b3a39"/></svg>
      <svg viewBox="0 0 23 25"><path class="w" d="M11 4h11.200v16.500H1V15"/><text x="5" y="16.500" font-size="10.500" fill="#2088d0">123</text><path d="M4 18.500h16" stroke="#a19f9d"/><path class="bolt" d="M4.500 0h6l-3 6h3L1.500 15l2-7H0Z"/></svg>
      <svg viewBox="0 0 23 25"><path d="M11 2h11v8H11ZM1 13h9v9H1Z" fill="#fafafa" stroke="#979593" stroke-width="1.400"/><path d="M8 5h4v5H8Z" fill="#83beec"/><path class="bolt" d="M4.500 0h6l-3 6h3L1.500 15l2-7H0Z"/><path class="w" d="M12 13h11l-3.500 4.500V24h-4v-6.500Z"/></svg>
      <svg viewBox="0 0 23 25"><path class="b" d="M1.500 1.500h21v11l-8 10h-13Z"/><path d="M20 7q-7 0-6 5t-6 4-6 6" fill="none" stroke="#fafafa" stroke-width="3"/><path d="M-.5 1h8v8q-1 4-4 5-3-1-4-5Z" fill="#d9710d"/><circle cx="3.500" cy="6" r="1.500" fill="#fff"/><circle cx="19.500" cy="20.500" r="4" fill="#d9710d" stroke="#f3f2f1"/><circle cx="22" cy="14.500" r="2" fill="#d9710d"/></svg>
      <svg viewBox="0 0 23 23" fill="#fff" stroke="#8b3fa0" stroke-width="1.500"><path d="M8 2h7l7 9.500-7 9.500H8L1 11.500ZM8 2l7 9.500L8 21M15 2l-7 9.500 7 9.500M4.500 7l3.500 4.500L4.500 16M18.500 7 15 11.500l3.500 4.500"/></svg>
      <svg viewBox="0 0 23 23" fill="#fff" stroke="#0d7fe0" stroke-width="1.500"><path d="M1 2h14l7 9.500L15 21H1l7-9.500ZM1 21 16 3.500M6 21 19 7.500M8 11.500 1 2"/></svg>
    </div>
    <div class="ell"><i></i><i></i><i></i></div>
    <div class="wells">
      <div class="lab">Values</div>
      <div class="well w1">Add data fields here</div>
      <div class="lab tt">Tooltip</div>
      <div class="keep"><span>Keep all filters</span><div class="toggle">On<i></i></div></div>
      <div class="well w2">Drag tooltip fields here</div>
    </div>
  </aside>

  <aside class="data">
    <div class="phead"><h3>Data</h3><svg width="16" height="16"><use href="#dbl"/></svg></div>
    <div class="dsearch"><svg width="19" height="19" viewBox="0 0 19 19" fill="none" stroke="#605e5c" stroke-width="1.300"><circle cx="7.500" cy="7.500" r="6.500"/><path d="M12 12l6 6"/></svg><span>Search</span></div>
    <div class="fields">
      <div><svg class="c"><use href="#chev"/></svg><svg class="t"><use href="#table"/></svg><span>base measures</span></div>
      <div><svg class="c"><use href="#chev"/></svg><svg class="t"><use href="#table"/></svg><span>Contribution Punch C...</span></div>
      <div><svg class="c"><use href="#chev"/></svg><svg class="t"><use href="#table"/></svg><span>Contributions</span></div>
      <div><svg class="c"><use href="#chev"/></svg><svg class="t"><use href="#table"/></svg><span>Issues</span></div>
      <div><svg class="c"><use href="#chev"/></svg><svg class="t"><use href="#table"/></svg><span>Milestones</span></div>
      <div><svg class="c"><use href="#chev"/></svg><svg class="t"><use href="#table"/></svg><span>Pull Requests</span></div>
      <div><svg class="c"><use href="#chev"/></svg><svg class="t"><use href="#table"/></svg><span>Repo Details</span></div>
      <div><svg class="c"><use href="#chev"/></svg><svg class="t"><use href="#table"/></svg><span>sales customers</span></div>
      <div><svg class="c"><use href="#chev"/></svg><svg class="t"><use href="#table"/></svg><span>sales date</span></div>
      <div><svg class="c"><use href="#chev"/></svg><svg class="t"><use href="#table"/></svg><span>sales markets</span></div>
      <div><svg class="c"><use href="#chev"/></svg><svg class="t"><use href="#table"/></svg><span>sales products</span></div>
      <div><svg class="c"><use href="#chev"/></svg><svg class="t"><use href="#table"/></svg><span>sales transactions</span></div>
    </div>
  </aside>
</main>

<footer class="status">
  <span>Page 3 of 3</span>
  <svg class="zoom" width="156" height="16" viewBox="1414 997 156 16" fill="none" stroke="#605e5c"><path d="M1416 1005h5.500" stroke-width="1.800"/><path d="M1427 1005.500h125M1489.500 1002v7"/><path d="M1466 999h5v13h-5Z" fill="#605e5c" stroke="none"/><path d="M1559 1005h9.500M1563.700 1000v10" stroke-width="1.700"/></svg>
  <span class="pct">70%</span>
  <svg class="fit" width="21" height="16" viewBox="0 0 21 16" fill="none" stroke="#605e5c" stroke-width="1.400"><path d="M.7.700h19.600v14.600H.7Z"/><path d="M3.500 6V3.500H7M14 3.500h3.500V6M3.500 10v2.500H7M14 12.500h3.500V10"/></svg>
  <span class="upd">Update available (click to download)</span>
</footer>
<div class="edge"><i></i><i></i></div>

<div class="taskbar">
  <svg class="wx" width="34" height="36" viewBox="24 1027 34 36"><path d="M28 1052q8 3 12-3l5-5q10 10-1 17-10 4-16-9Z" fill="#f59a23"/><path d="M27 1045q-4-1-1-5 3-1 4-4 5-3 8 2 7 2 4 7Z" fill="#b9cdf0"/><path d="M39 1060q-3-4 2-6 4-5 8 0 6 0 6 5-1 1-2 1Z" fill="#c3d4f4"/><circle cx="48.500" cy="1038" r="10" fill="#ff8f96"/><text x="48.500" y="1043" font-size="13" text-anchor="middle" fill="#111">9+</text></svg>
  <div class="wtext"><b>28°C</b><span>Partly cloudy</span></div>
  <svg class="start" width="29" height="29" viewBox="0 0 29 29" fill="url(#win)"><path d="M1 0h13v14H0V1q0-1 1-1ZM15 0h13q1 0 1 1v13H15ZM0 15h14v14H1q-1 0-1-1ZM15 15h14v13q0 1-1 1H15Z"/></svg>
  <div class="tsearch"><svg width="20" height="20" viewBox="0 0 20 20" fill="none" stroke="#f0f2f6" stroke-width="2"><circle cx="8.500" cy="8.500" r="7.300"/><path d="M13.500 13.500 18.500 19" stroke-width="2.400"/></svg><span>Search</span></div>
  <div class="apps">
    <div><svg width="30" height="28" viewBox="0 0 30 28"><path d="M0 8h22v20H0Z" fill="#6b6b6b"/><path d="M7 0h23v20H7Z" fill="#f5f5f5"/><path d="M7 8h15v12H7Z" fill="#b5b5b5"/></svg></div>
    <div><svg width="29" height="26"><use href="#copilot" width="29" height="26"/></svg></div>
    <div class="run"><svg width="31" height="28" viewBox="0 0 31 28"><path d="M0 2q0-2 2-2h7l4 3v6H0Z" fill="#e0a012"/><path d="M0 7h11l4-3h14q2 0 2 2v20H2q-2 0-2-2Z" fill="url(#fold)"/><path d="M5 26v-4q0-3 3-3h14q3 0 3 3v4Z" fill="#0f78c8"/><path d="M9 22.500h13" stroke="#0a4a80"/></svg></div>
    <div><svg width="28" height="28" viewBox="0 0 28 28"><path d="M0 0h17l6 6v22H0Z" fill="#ececec"/><path d="M2 3v25M4 5h12M4 9h14M4 13h12M4 17h8M4 21h9M4 25h10" stroke="#a5a5a5" stroke-dasharray="2 1"/><path d="M13 17q0-2 2-2h1v-3q0-2 3-2 4 0 4 3v4h-5q-2 0-2 3-3 1-3-3Z" fill="#3b77a8"/><path d="M28 18q0 5-2 5h-4v1q0 3-3 2-2 0-2-3t3-3h3v-5q5-1 5 3Z" fill="#ffd342"/></svg></div>
    <div><svg width="30" height="21" viewBox="0 0 30 21"><rect width="30" height="21" rx="4" fill="#f00"/><path d="M11.500 6.500v8.500l8-4.200Z" fill="#fff"/></svg></div>
    <div><svg width="30" height="29" viewBox="0 0 30 29"><use href="#copilot" width="30" height="28"/><rect x="9" y="19" width="21" height="9" rx="1" fill="#000"/><text x="10.500" y="26.500" font-size="7.500" font-weight="700" fill="#fff" textLength="18" lengthAdjust="spacingAndGlyphs">M365</text></svg></div>
    <div><svg width="30" height="27" viewBox="0 0 30 27"><path d="M4 7 17 0l13 7v17q0 2-2 2H7q-3 0-3-3Z" fill="#1a68b8"/><path d="M8 6l10-5 9 5-11 8Z" fill="#58b8f0"/><path d="M12 18 30 8v16q0 2-2 2H10q-4 0-6-2Z" fill="#3fc4f2"/><rect y="7" width="16" height="15" rx="1.500" fill="#0a62b8"/><circle cx="8" cy="14.500" r="4" fill="none" stroke="#fff" stroke-width="2.200"/></svg></div>
    <div><svg width="30" height="30" viewBox="0 0 30 30"><circle cx="15" cy="15" r="15" fill="url(#fbg)"/><path d="M12.500 25V16.500H9.500v-4h3V10q0-5 5-5h3v4h-2q-2 0-2 2v1.500h4l-.7 4h-3.300V25Z" fill="#fff"/></svg></div>
    <div><svg width="30" height="30" viewBox="0 0 30 30"><circle cx="15" cy="15" r="15" fill="#0c6fc4"/><path d="M0 15Q0 6 9 1.500 20-3 27 6q6 11-3 14-6 1-6-2 3-4-1-7Q9 6 0 15Z" fill="url(#edgeA)"/><path d="M13 12q-4 8 3 13 6 2 12-3-5 10-16 7-8-6-4-13 2-4 5-4Z" fill="#0d3f86"/><path d="M16 11q4 2 3 5-2 2-1 4 3 3 9 0l2 2q-4 3-10 2-7-3-5-10Z" fill="#132444"/></svg></div>
    <div class="run"><svg class="chrome" width="36" height="36" viewBox="0 0 36 36"><path d="M15 21 2 13.500A15 15 0 0 1 28 13.500Z" fill="#ea4335"/><path d="M15 21 28 13.500A15 15 0 0 1 15 36Z" fill="#fbbc04"/><path d="M15 21v15A15 15 0 0 1 2 13.500Z" fill="#1e9548"/><circle cx="15" cy="21" r="7.500" fill="#fff"/><circle cx="15" cy="21" r="5.700" fill="#2b74e8"/><circle cx="26" cy="10" r="10" fill="#5c6bc0"/><text x="26" y="14" font-size="11.500" font-weight="600" text-anchor="middle" fill="#dfe3f5">A</text></svg></div>
    <div class="run"><svg width="28" height="28" viewBox="0 0 28 28"><circle cx="14" cy="14" r="14" fill="#1ed760"/><path d="M6 9.500q9-2.500 17 2M6.500 14q8-2 14.500 2M7 18.500q7-1.500 12 1.500" fill="none" stroke="#0d1f16" stroke-width="2.300" stroke-linecap="round"/></svg></div>
    <div class="run act"><svg width="24" height="30" viewBox="0 0 24 30"><path d="M12 1q0-1 1-1h9q1 0 1 1v28q0 1-1 1H12Z" fill="#d9920f"/><path d="M6 9q0-1 1-1h9q1 0 1 1v21H6Z" fill="#f0bd32"/><path d="M0 16q0-1 1-1h9q1 0 1 1v14H1q-1 0-1-1Z" fill="#f8dc6c"/></svg></div>
  </div>
  <svg class="tcaret" width="14" height="8" viewBox="0 0 14 8" fill="none" stroke="#fff" stroke-width="1.700"><path d="M1 7l6-5.800L13 7"/></svg>
  <svg class="od" width="20" height="17" viewBox="0 0 20 17"><path d="M3 13q-4-1-2-6 3-1 4-4 6-6 11 2v7Z" fill="#9aa0a8"/><path d="M3 13q-4-1-2-5 5-4 8 0l3 5Z" fill="#eef0f2"/><circle cx="14.500" cy="11" r="5.500" fill="#d8242c"/><path d="M12.500 9l4 4M16.500 9l-4 4" stroke="#fff" stroke-width="1.400"/></svg>
  <div class="lang">ENG<br>IN</div>
  <svg class="tray" width="82" height="20" viewBox="0 0 82 20" fill="none" stroke="#fff" stroke-width="1.500"><path d="M1 7.500q9.500-9 19 0M3.800 10.500q6.700-6.500 13.400 0M6.500 13.500q4-4 8 0"/><circle cx="10.500" cy="16" r="1.500" fill="#fff"/><path d="M31 7.500h3.500l5-5v15l-5-5H31ZM42 7q2 3 0 6M44.500 5q3.500 5 0 10M47 3q5.500 7 0 14"/><path d="M68 5h9q1.500 0 1.500 1.500v8q0 1.500-1.500 1.500H63q-2 0-2-2v-3M80.500 8.500v4"/><path d="M64 1l-2 5h5l-5 7" stroke-width="2"/></svg>
  <div class="clock">01:51<br>13-05-2025</div>
  <svg class="bell" width="18" height="20" viewBox="0 0 18 20"><path d="M2 15V8q0-6 6-6h3v5h5v8h1v1H0v-1ZM6 17h5q0 2-2.500 2T6 17Z" fill="#fff"/><path d="M12 1h4l-4 4.500h4" fill="none" stroke="#fff" stroke-width="1.300"/><path d="M6 8h4l-4 4h4" fill="none" stroke="#132444" stroke-width="1.300"/></svg>
</div>
</body>
</html>
```
FILE: styles.css
```css
* { box-sizing: border-box; letter-spacing: -0.025em; }
body { margin: 0; width: 1920px; height: 1080px; overflow: hidden; font-family: "Open Sans", "Noto Sans", sans-serif; font-size: 15px; color: #252423; background: #f3f2f1; display: flex; flex-direction: column; }
h1, h2, h3 { margin: 0; font-weight: 400; }
i, em { font-style: normal; }
svg { flex: none; display: block; overflow: visible; }
.defs { height: 0; }

/* icon strokes */
.k { fill: none; stroke: #3b3a39; stroke-width: 1.5; }
.gl { fill: none; stroke: #797775; stroke-width: 1.3; }
.b { fill: #83beec; stroke: #1068b0; stroke-width: 1.4; }
.g { fill: #c8c6c4; stroke: #8a8886; stroke-width: 1.3; }
.w { fill: #fafafa; stroke: #3b3a39; stroke-width: 1.4; }
.pen { fill: #fafafa; stroke: #1f7ec4; stroke-width: 1.6; }
.pb { fill: #6db6ee; stroke: #1f7ec4; }
.bolt { fill: #fbc673; stroke: #d9710d; stroke-width: 1.3; }

/* title bar */
.titlebar { flex: none; height: 43px; background: #3b3a37; color: #fff; display: flex; align-items: center; }
.quick { margin: 0 6px 0 20px; }
.doc { width: 584px; white-space: nowrap; font-size: 14.800px; letter-spacing: -0.013em; padding-top: 4px; }
.caret { margin-left: 9px; }
.search { margin-left: 231px; width: 500px; height: 30px; margin-top: -1px; background: #d4d4d2; border-radius: 2px; display: flex; align-items: center; padding-left: 21px; gap: 15px; font-size: 17px; color: #1f5c50; }
.signin { margin-left: 193px; width: 47px; white-space: nowrap; font-size: 14.500px; }
.avatar { margin-left: 10px; }
.winbtns { margin-left: 40px; margin-top: 3px; }

/* menu */
.menu { flex: none; height: 42px; background: #fafafa; display: flex; padding-left: 28px; font-size: 17.500px; line-height: 39px; position: relative; }
.menu > span { white-space: nowrap; }
.m-file { width: 72.500px; } .m-home { width: 86.500px; font-weight: 700; letter-spacing: -0.035em; } .m-ins { width: 84px; } .m-mod { width: 114px; } .m-view { width: 75px; } .m-opt { width: 110px; }
.m-home::after { content: ""; display: block; width: 48px; height: 3px; margin-top: -4px; background: #117865; }
.share { margin: 5px 7px 0 auto; width: 105px; height: 30px; border-radius: 4px; background: #117865; color: #fff; display: flex; align-items: center; padding-left: 9px; font-size: 14.500px; font-weight: 600; }
.share span { margin: 0 6px 0 9px; width: 37px; white-space: nowrap; letter-spacing: -0.035em; }

/* ribbon */
.ribbon { flex: none; height: 115px; background: #fafafa; display: flex; position: relative; padding-top: 3px; }
.group { height: 111px; border-right: 1px solid #d2d0ce; display: flex; flex-direction: column; justify-content: space-between; }
.gname { font-size: 13px; text-align: center; line-height: 15px; height: 15px; color: #323130; }
.btns, .clip { display: flex; padding-top: 6px; }
.btn { display: flex; flex-direction: column; align-items: center; font-size: 14.700px; line-height: 20px; text-align: center; white-space: nowrap; }
.ri { width: 40px; height: 40px; margin-bottom: 3px; }
.dn { display: inline-block; width: 8px; height: 6px; margin-left: 2px; vertical-align: 1px; }
.off { color: #c4c3c2; }
.g-clip { width: 201px; }
.clip { padding-left: 18px; }
.paste { width: 34px; display: flex; flex-direction: column; align-items: center; line-height: 20px; font-size: 14.700px; }
.paste svg { margin: 0 -5px 3px 3px; }
.cliplist { padding: 0 0 0 13px; margin-top: -7px; }
.cliplist div { height: 30px; display: flex; align-items: center; gap: 4px; white-space: nowrap; font-size: 14.700px; }
.g-data { width: 459px; } .g-data .btns { padding-left: 11px; display: grid; grid-template-columns: 48px 72px 77px 52px 48px 72px 68px; }
.g-query { width: 145px; } .g-query .btns { padding-left: 10px; display: grid; grid-template-columns: 70px 55px; }
.g-ins { width: 184px; } .g-ins .btns { padding-left: 10px; display: grid; grid-template-columns: 50px 50px 62px; }
.g-calc { width: 233px; } .g-calc .btns { padding-left: 9px; display: grid; grid-template-columns: 92px 60px 61px; }
.g-sens { width: 92px; } .g-share { width: 73px; } .g-cop { width: 74px; }
.g-sens .btns, .g-share .btns, .g-cop .btns { justify-content: center; }
.fold { position: absolute; right: 5px; top: 100px; }

/* workspace */
.work { flex: none; height: 791px; display: flex; border-bottom: 1px solid #dcdad8; }
.rail { width: 51px; border-right: 1px solid #d8d6d4; background: #f3f2f1; }
.rail div { height: 50px; display: flex; align-items: center; justify-content: center; padding-bottom: 2px; }
.rail .rail-on { border-left: 3px solid #117865; padding: 0 3px 0 0; }
.center { width: 1417px; display: flex; flex-direction: column; }
.canvas { height: 746px; background: #c49291; padding: 13px 0 0 131px; box-shadow: inset 0 5px 6px -4px rgba(80, 40, 40, .45); overflow: hidden; }
.page { width: 1155px; height: 636px; background: #c49291; box-shadow: 0 0 9px 3px rgba(198, 184, 182, .8); padding-top: 6px; }
.row1 { display: flex; height: 100px; }
.ptitle { margin-left: 47px; width: 232px; height: 92px; border-radius: 16px; background: #4e3836; border: 1px solid #241818; color: #ecebea; font: 35px/40px "Liberation Serif", serif; letter-spacing: 0; padding: 7px 0 0 10px; }
.kpi { width: 183px; height: 81px; border: 1px solid #2e1c1c; border-radius: 9px; background: #e88282; color: #ebe6e4; display: flex; flex-direction: column; align-items: center; box-shadow: 4px 5px 10px rgba(60, 30, 30, .5); }
.kpi b { font: 500 30px/40px Roboto, "Noto Sans", sans-serif; letter-spacing: -.2px; margin-top: 13px; }
.kpi span { font-size: 13.500px; line-height: 18px; margin-top: 2px; }
.k1 { margin: 6px 0 0 67px; } .k2 { margin: 6px 0 0 91px; } .k3 { margin: 7px 0 0 83px; }
.row2 { display: flex; }
.slicer { height: 62px; border: 1px solid #6e5050; border-radius: 14px; background: #b85858; display: flex; align-items: flex-start; padding-top: 10px; box-shadow: 2px 4px 10px rgba(90, 50, 50, .3); }
.s1 { margin-left: 25px; width: 254px; padding-left: 27px; gap: 1px; }
.s2 { margin-left: 8.500px; width: 847.500px; padding-left: 26px; gap: 1px; }
.tile { width: 49.500px; height: 39px; background: #e6e6e6; color: #555; font-size: 11.500px; line-height: 14px; text-align: center; display: flex; align-items: center; justify-content: center; }
.s1 .tile { width: 49.300px; }
.s2 .tile { width: 48.700px; }
.slicer .sel, .slicer .part { background: #303030; color: #fff; border: 1px solid #aaa; font-weight: 600; letter-spacing: -0.045em; }
.slicer .part { background: #6a4242; padding: 0 5px; }
.more { width: 8px; height: 14px; margin: 13px 0 0 6px; fill: none; stroke: #8a5050; stroke-width: 1.300; }
.row3 { display: flex; }
.market { margin: 22px 0 0 32px; width: 314px; height: 436px; border-radius: 14px; background: #3e3232; border: 1px solid #1e1616; color: #eceae8; }
.market h2 { font: 500 14px/20px Roboto, sans-serif; letter-spacing: .4px; text-align: center; margin-top: 3px; margin-bottom: 21px; }
.mrow { height: 28.880px; display: flex; align-items: flex-start; line-height: 23px; font-size: 9.800px; font-weight: 600; }
.mrow .city { width: 84px; text-align: right; white-space: nowrap; }
.mrow .neg { width: 81px; display: flex; justify-content: flex-end; }
.mrow .bar { height: 23px; }
.mrow em { margin-left: 6.500px; font-weight: 600; letter-spacing: -0.05em; }
.mrow .neg em { margin-right: 7px; }
.right { margin: 10px 0 0 55px; position: relative; }
.trend { width: 723px; height: 180px; background: #b85858; color: #eee; margin-left: -.5px; }
.trend h2 { font: 500 14px/20px Roboto, sans-serif; letter-spacing: .4px; text-align: center; }
.legend { display: flex; justify-content: flex-end; align-items: center; height: 30px; margin-top: -1px; padding-right: 8px; font-size: 10.700px; white-space: nowrap; }
.legend span { letter-spacing: -0.04em; }
.legend i { width: 9px; height: 9px; border-radius: 50%; background: #fff; margin: 0 1.500px 0 4px; }
.legend .dk { background: #462424; }
.plot { margin-top: -8px; }
.grid { stroke: #e0b8b8; stroke-width: 1; stroke-dasharray: 1.500 4; fill: none; }
.axis { font-size: 10.500px; fill: #f2eaea; }
.dim { fill: #8e6462; }
.vhead { position: absolute; left: 635px; top: 174px; display: flex; gap: 4.500px; }
.vhead span { width: 30px; height: 29px; background: #fff; display: flex; align-items: center; justify-content: center; gap: 5px; }
.vhead svg { fill: none; stroke: #605e5c; stroke-width: 1.400; }
.dots i { width: 3px; height: 3px; border-radius: 50%; background: #605e5c; }
.tbl { margin-top: 24px; width: 735px; height: 237px; border: 2px solid #d9a8a8; background: #b85858; display: flex; padding: 3px 0 0 4px; }
table { width: 698px; height: 228px; border-collapse: collapse; table-layout: fixed; font-size: 12.500px; color: #fff; white-space: nowrap; }
th, td { padding: 0; line-height: 17px; text-align: right; overflow: visible; }
th:nth-child(1) { width: 152px; } th:nth-child(2) { width: 114px; } th:nth-child(3) { width: 163px; } th:nth-child(4) { width: 170px; } th:nth-child(5) { width: 99px; }
thead tr { height: 25px; background: #965c5c; border-bottom: 2px solid #7b74ab; }
th { font-weight: 400; font-size: 11.900px; text-align: center; padding-bottom: 4px; color: #ece4e4; position: relative; }
.srt::after { content: ""; position: absolute; left: 4px; bottom: 2px; border: 4px solid transparent; border-top: 4px solid #fff; border-bottom: 0; }
tbody tr { height: 20px; background: #a95d5d; border-bottom: 1px solid #d9c0c0; }
tbody tr:nth-child(even) { background: #2f1313; }
tbody tr:last-child { border-bottom: 2px solid #56507e; }
tbody .hov { color: #c0b8b8; }
td { padding: 0 4px 1px 0; }
td:first-child { text-align: left; padding-left: 4px; }
tfoot tr { background: #a95d5d; height: 21px; font-weight: 700; }
.scroll { width: 8px; height: 228px; border-radius: 4px; background: #dca6a8; margin-left: 19px; }
.scroll i { display: block; width: 8px; height: 54px; border-radius: 4px; background: #8e5353; border: 1px solid #dca6a8; }

/* page tabs */
.pages { height: 44px; display: flex; }
.devs { width: 159px; height: 44px; padding-top: 2px; }
.tab { background: #fff; border-left: 1px solid #b8b6b4; text-align: center; line-height: 45px; font-size: 14.900px; white-space: nowrap; }
.t1 { width: 140px; } .t2 { width: 144px; }
.t3 { width: 200px; border-bottom: 5px solid #117865; position: relative; font-size: 15.100px; letter-spacing: -0.015em; }
.t3 b { position: absolute; right: 6px; top: 2px; font-size: 12px; line-height: 20px; font-weight: 600; }
.plus { width: 48px; background: #117865; display: flex; justify-content: center; padding-top: 13px; }

/* panes */
.viz { width: 227px; border-left: 1px solid #d8d6d4; border-right: 1px solid #d8d6d4; box-shadow: inset 0 4px 4px -3px rgba(0, 0, 0, .25); }
.data { width: 225px; box-shadow: inset 0 4px 4px -3px rgba(0, 0, 0, .25); }
.phead { display: flex; justify-content: space-between; align-items: center; height: 50px; padding: 0 10px; }
.phead h3 { font-size: 19.400px; font-weight: 600; white-space: nowrap; }
.data .phead { padding-left: 11px; }
.build { margin: -1px 0 0 10px; font-weight: 600; line-height: 18px; font-size: 14.600px; }
.modes { display: flex; margin-top: 5px; padding-left: 10px; }
.mode { width: 40px; height: 40px; background: #d2d0ce; border-radius: 3px; padding: 5px 0 0 5px; }
.fmt { margin: 5px 0 0 48px; }
.notch { margin-top: 5px; }
.icons { display: grid; grid-template-columns: repeat(6, 23px); grid-auto-rows: 23px; gap: 12px; margin: 13px 0 0 14px; }
.icons svg { width: 23px; height: 23px; }
.ell { display: flex; gap: 5.500px; margin: 20px 0 0 17px; height: 26px; }
.ell i { width: 2px; height: 2px; background: #252423; }
.wells { border-top: 1px solid #d8d6d4; padding: 12px 7px 0 5px; font-size: 14.800px; }
.lab { line-height: 20px; margin-left: 10px; }
.tt { margin-top: 13px; font-weight: 600; color: #484644; }
.well { background: #fff; border: 1px dashed #bebbb8; border-radius: 2px; white-space: nowrap; }
.w1 { height: 35px; line-height: 33px; margin-top: 5px; padding-left: 13px; }
.w2 { height: 33px; line-height: 31px; margin-top: 9px; padding-left: 10px; }
.keep { display: flex; align-items: center; margin: 10px 20px 0 10px; height: 26px; justify-content: space-between; white-space: nowrap; }
.keep span { margin-top: -3px; }
.toggle { width: 40px; height: 20px; border-radius: 10px; background: #117865; color: #fff; font-size: 11.500px; line-height: 20px; display: flex; align-items: center; padding-left: 6px; gap: 3px; }
.toggle i { width: 11px; height: 11px; border-radius: 50%; background: #fff; }
.dsearch { margin: 7px 0 0 5px; width: 215px; height: 30px; background: #fff; border: 1px solid #c8c6c4; border-bottom-color: #605e5c; border-radius: 4px; display: flex; align-items: center; gap: 8px; padding-left: 14px; font-size: 17px; color: #605e5c; }
.fields { padding-top: 11px; font-size: 14.800px; color: #323130; }
.fields div { height: 30px; display: flex; align-items: center; padding-left: 19px; white-space: nowrap; }
.fields .c { width: 9px; height: 15px; margin-right: 8px; }
.fields .t { width: 16px; height: 16px; margin-right: 7px; }

/* status */
.status { flex: none; height: 28px; display: flex; align-items: center; padding-left: 5px; font-size: 15px; color: #484644; white-space: nowrap; }
.status .zoom { margin-left: auto; }
.pct { width: 30px; margin-left: 15px; color: #605e5c; font-size: 14.500px; }
.fit { margin-left: 22px; margin-top: 2px; }
.upd { width: 241px; margin: 1px 4px 0 17px; }
.edge { flex: none; height: 1px; display: flex; justify-content: space-between; }
.edge i { width: 701px; background: #000; }
.edge i + i { width: 245px; }

/* taskbar */
.taskbar { flex: none; height: 60px; background: #132444; border-top: 1px solid #3a4862; color: #fff; display: flex; align-items: center; white-space: nowrap; }
.wx { margin: -10px 0 0 24px; }
.wtext { margin: -3px 0 0 6px; width: 411px; display: flex; flex-direction: column; line-height: 20px; font-size: 15px; }
.wtext b { font-weight: 400; }
.wtext span { color: #c5cad4; }
.start { margin-top: -1px; }
.tsearch { margin: -1px 0 0 17px; width: 275px; height: 40px; border-radius: 20px; background: #35435d; border: 1px solid #46536b; display: flex; align-items: center; gap: 11px; padding-left: 14px; font-size: 17px; color: #c8ccd6; }
.apps { display: flex; gap: 5px; margin: -1px 0 0 5px; }
.apps div { width: 50px; height: 50px; display: flex; align-items: center; justify-content: center; position: relative; }
.run::after { content: ""; position: absolute; bottom: 1px; left: 21px; width: 8px; height: 4px; border-radius: 2px; background: #98a1b0; }
.apps .act { background: #22344f; border-radius: 4px; border: 1px solid #2c3d58; }
.apps .act::after { left: 14px; width: 20px; background: #9a8770; }
.chrome { margin: -6px 0 0 6px; }
.tcaret { margin-left: 100px; margin-top: -1px; }
.od { margin-left: 23px; }
.lang { width: 50px; margin: -3px 0 0 13px; text-align: center; font-size: 14.500px; line-height: 20px; }
.tray { margin: -1px 0 0 11px; }
.clock { width: 90px; margin: -3px 0 0 6px; text-align: right; font-size: 15px; line-height: 20px; letter-spacing: 0; }
.clock { letter-spacing: -0.01em; }
.bell { margin-left: 11px; margin-top: -2px; }
```
